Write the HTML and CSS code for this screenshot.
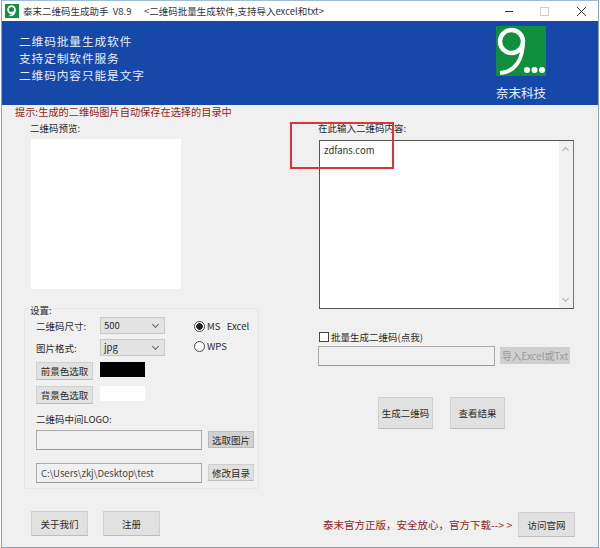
FILE: index.html
```html
<!DOCTYPE html>
<html lang="zh-CN">
  <head>
    <meta charset="UTF-8" />
    <title>二维码生成助手</title>
    <link rel="stylesheet" href="styles.css">
  </head>
  <body>
    <div class="window">
      <div class="titlebar">
        <svg class="app-icon" width="14" height="14" viewBox="0 0 14 14">
          <rect width="14" height="14" fill="#12903f" />
          <circle cx="6.5" cy="5.6" r="3.4" fill="none" stroke="#fff" stroke-width="1.8" />
          <path d="M9.9 6 C9.9 9 8.5 11.5 4.5 11.5" fill="none" stroke="#fff" stroke-width="1.6" />
        </svg>
        <span class="app-name">泰末二维码生成助手&nbsp; V8.9</span>
        <span class="app-sub">&lt;二维码批量生成软件,支持导入excel和txt&gt;</span>
        <div class="controls">
          <svg width="81" height="20" viewBox="0 0 81 20">
            <path d="M0 10.5H8" stroke="#333" stroke-width="1" />
            <rect x="35.5" y="6.5" width="8" height="8" fill="none" stroke="#ccc" />
            <path d="M72 6L81 15M81 6L72 15" stroke="#333" stroke-width="1" />
          </svg>
        </div>
      </div>

      <div class="banner">
        <div class="banner-text">
          <p>二维码批量生成软件</p>
          <p>支持定制软件服务</p>
          <p>二维码内容只能是文字</p>
        </div>
        <div class="brand">
          <svg class="brand-logo" width="50" height="50" viewBox="0 0 50 50">
            <rect width="50" height="50" fill="#0f8f3e" />
            <circle cx="15.5" cy="15.5" r="11.5" fill="none" stroke="#fff" stroke-width="4.4" />
            <path d="M27 16 C27 32 20 46 4 47" fill="none" stroke="#fff" stroke-width="3.8" />
            <circle cx="31" cy="44" r="3" fill="#fff" />
            <circle cx="38.5" cy="44" r="3" fill="#fff" />
            <circle cx="46" cy="44" r="3" fill="#fff" />
          </svg>
          <span class="brand-name">奈末科技</span>
        </div>
      </div>

      <p class="hint">提示:生成的二维码图片自动保存在选择的目录中</p>

      <div class="main">
        <div class="left">
          <div class="field-label preview-label">二维码预览:</div>
          <div class="preview"></div>

          <div class="settings">
            <span class="legend">设置:</span>
            <div class="settings-top">
              <div class="settings-rows">
                <div class="row">
                  <span class="row-label">二维码尺寸:</span>
                  <span class="select">500<i class="chev"></i></span>
                </div>
                <div class="row">
                  <span class="row-label">图片格式:</span>
                  <span class="select">jpg<i class="chev"></i></span>
                </div>
              </div>
              <div class="radios">
                <div class="radio-row"><i class="radio on"></i>MS&nbsp;&nbsp; Excel</div>
                <div class="radio-row"><i class="radio"></i>WPS</div>
              </div>
            </div>
            <div class="color-row">
              <button class="btn color-btn">前景色选取</button>
              <span class="swatch black"></span>
            </div>
            <div class="color-row second">
              <button class="btn color-btn">背景色选取</button>
              <span class="swatch white"></span>
            </div>
            <div class="field-label logo-label">二维码中间LOGO:</div>
            <div class="path-row">
              <span class="input"></span>
              <button class="btn side-btn picked">选取图片</button>
            </div>
            <div class="path-row last">
              <span class="input">C:\Users\zkj\Desktop\test</span>
              <button class="btn side-btn">修改目录</button>
            </div>
          </div>

          <div class="footer-left">
            <button class="btn footer-btn">关于我们</button>
            <button class="btn footer-btn">注册</button>
          </div>
        </div>

        <div class="right">
          <div class="field-label">在此输入二维码内容:</div>
          <div class="textarea">
            <span class="textarea-value">zdfans.com</span>
            <div class="scrollbar"><i class="up"></i><i class="down"></i></div>
          </div>
          <div class="check-row"><i class="check"></i>批量生成二维码(点我)</div>
          <div class="import-row">
            <span class="input wide"></span>
            <button class="btn import-btn">导入Excel或Txt</button>
          </div>
          <div class="actions">
            <button class="btn action-btn">生成二维码</button>
            <button class="btn action-btn">查看结果</button>
          </div>
          <div class="footer-right">
            <span class="promo">泰末官方正版，安全放心，官方下载--&gt; &gt;</span>
            <button class="btn footer-btn">访问官网</button>
          </div>
        </div>
      </div>

      <div class="callout"></div>
    </div>
  </body>
</html>
```

FILE: styles.css
```css
* {
  box-sizing: border-box;
  font-family: "Noto Sans CJK SC", "Liberation Sans", sans-serif;
}
html, body {
  margin: 0;
  background-color: #fff;
}
p {
  margin: 0;
}
i {
  display: block;
}
.window {
  position: relative;
  width: 598px;
  height: 548px;
  margin-left: 1px;
  background-color: #f0f0f0;
  border: 1px solid #7ea6c4;
  border-top-color: #9dbdd3;
  color: #2a2a2a;
  font-size: 9.5px;
  overflow: hidden;
}

/* title bar */
.titlebar {
  display: flex;
  align-items: center;
  height: 20px;
  background-color: #fff;
  padding-left: 3px;
  font-size: 9.5px;
  color: #333;
}
.app-icon {
  margin-right: 4px;
}
.app-name {
  width: 121px;
}
.controls {
  margin-left: auto;
  margin-right: 12px;
  display: flex;
}

/* banner */
.banner {
  display: flex;
  justify-content: space-between;
  height: 84px;
  background-color: #1548a8;
  color: #e8eef8;
  padding: 5px 52px 0 17px;
}
.banner-text {
  padding-top: 6px;
  font-size: 11.7px;
  letter-spacing: 0.9px;
  line-height: 17px;
}
.brand {
  display: flex;
  flex-direction: column;
  align-items: center;
}
.brand-logo {
  display: block;
}
.brand-name {
  font-size: 12.5px;
  line-height: 18px;
  margin-top: 8px;
}

.hint {
  color: #8e1f22;
  font-size: 10.2px;
  line-height: 14px;
  margin: 0 0 0 13px;
}

/* layout */
.main {
  display: flex;
}
.left {
  width: 316px;
  padding-left: 22px;
}
.right {
  flex: 1;
  padding-top: 2px;
}
.field-label {
  line-height: 14px;
}
.preview-label {
  margin: 2px 0 0 6px;
}
.preview {
  width: 150px;
  height: 150px;
  margin: 4px 0 0 7px;
  background-color: #fff;
}

/* settings group */
.settings {
  position: relative;
  width: 235px;
  height: 181px;
  margin-top: 19px;
  padding: 8px 0 0 11px;
  border: 1px solid #e6e6e6;
  border-radius: 2px;
}
.legend {
  position: absolute;
  top: -5px;
  left: 4px;
  line-height: 13px;
  padding: 0 1px;
  background-color: #f0f0f0;
}
.settings-top {
  display: flex;
}
.settings-rows {
  width: 158px;
}
.row {
  display: flex;
  align-items: center;
  height: 17px;
  margin-bottom: 5px;
}
.row-label {
  width: 64px;
}
.select {
  position: relative;
  width: 65px;
  height: 17px;
  padding-left: 3px;
  line-height: 15px;
  background-color: #e3e3e3;
  border: 1px solid #c8c8c8;
}
.chev {
  position: absolute;
  top: 4px;
  right: 6px;
  width: 5px;
  height: 5px;
  border-right: 1px solid #666;
  border-bottom: 1px solid #666;
  transform: rotate(45deg);
}
.radios {
  padding-top: 1px;
}
.radio-row {
  display: flex;
  align-items: center;
  height: 16px;
  margin-bottom: 4px;
  white-space: nowrap;
}
.radio {
  width: 11px;
  height: 11px;
  margin-right: 2px;
  border: 1px solid #444;
  border-radius: 50%;
  background-color: #fff;
}
.radio.on {
  background: radial-gradient(circle, #222 0 3px, #fff 3.5px);
}
.btn {
  padding: 0;
  font-size: 9.5px;
  color: #2a2a2a;
  background-color: #e1e1e1;
  border: 1px solid #cfcfcf;
  border-bottom-color: #bdbdbd;
}
.color-row {
  display: flex;
  align-items: flex-start;
  gap: 7px;
  margin-top: 1px;
}
.color-row.second {
  margin-top: 6px;
}
.color-btn {
  width: 57px;
  height: 18px;
}
.swatch {
  width: 45px;
  height: 15px;
}
.swatch.black {
  background-color: #000;
}
.swatch.white {
  background-color: #fff;
}
.logo-label {
  margin-top: 8px;
}
.path-row {
  display: flex;
  align-items: flex-start;
  gap: 6px;
  margin-top: 4px;
}
.path-row.last {
  margin-top: 13px;
}
.input {
  width: 166px;
  height: 20px;
  padding-left: 4px;
  line-height: 18px;
  color: #444;
  background-color: #f0f0f0;
  border: 1px solid #a9a9a9;
  border-bottom-color: #999;
}
.side-btn {
  width: 46px;
  height: 17px;
  margin-top: 1px;
}
.side-btn.picked {
  background-color: #d2d2d2;
  border-color: #bbb;
}
.footer-left {
  display: flex;
  gap: 15px;
  margin: 22px 0 0 7px;
}
.footer-btn {
  width: 57px;
  height: 25px;
}

/* right column */
.textarea {
  position: relative;
  width: 255px;
  height: 169px;
  margin: 5px 0 0 1px;
  padding: 1px 0 0 4px;
  background-color: #fff;
  border: 1px solid #555;
  border-right-color: #777;
  line-height: 14px;
  color: #333;
}
.textarea-value {
  display: block;
  margin-top: 1px;
}
.scrollbar {
  position: absolute;
  top: 0;
  right: 0;
  bottom: 0;
  width: 14px;
  background-color: #f0f0f0;
}
.scrollbar i {
  position: absolute;
  left: 4px;
  width: 5px;
  height: 5px;
  border-left: 1px solid #b0b0b0;
  border-top: 1px solid #b0b0b0;
}
.scrollbar .up {
  top: 7px;
  transform: rotate(45deg);
}
.scrollbar .down {
  bottom: 7px;
  transform: rotate(225deg);
}
.check-row {
  display: flex;
  align-items: center;
  height: 14px;
  margin: 21px 0 0 1px;
  gap: 2px;
}
.check {
  width: 10px;
  height: 10px;
  background-color: #fff;
  border: 1px solid #444;
}
.import-row {
  display: flex;
  align-items: flex-start;
  gap: 5px;
  margin-top: 2px;
}
.input.wide {
  width: 177px;
}
.import-btn {
  width: 70px;
  height: 17px;
  margin-top: 1px;
  font-size: 9.8px;
  white-space: nowrap;
  color: #999;
  background-color: #cfcfcf;
  border-color: #cfcfcf;
}
.actions {
  display: flex;
  gap: 17px;
  margin: 31px 0 0 60px;
}
.action-btn {
  width: 55px;
  height: 32px;
}
.footer-right {
  display: flex;
  align-items: center;
  gap: 6px;
  margin: 83px 0 0 5px;
}
.promo {
  width: 189px;
  font-size: 10.5px;
  color: #8e1f22;
  white-space: nowrap;
}

/* red annotation drawn over the screenshot */
.callout {
  position: absolute;
  top: 121px;
  left: 288px;
  width: 104px;
  height: 47px;
  border: 2px solid #e0323c;
}
```
